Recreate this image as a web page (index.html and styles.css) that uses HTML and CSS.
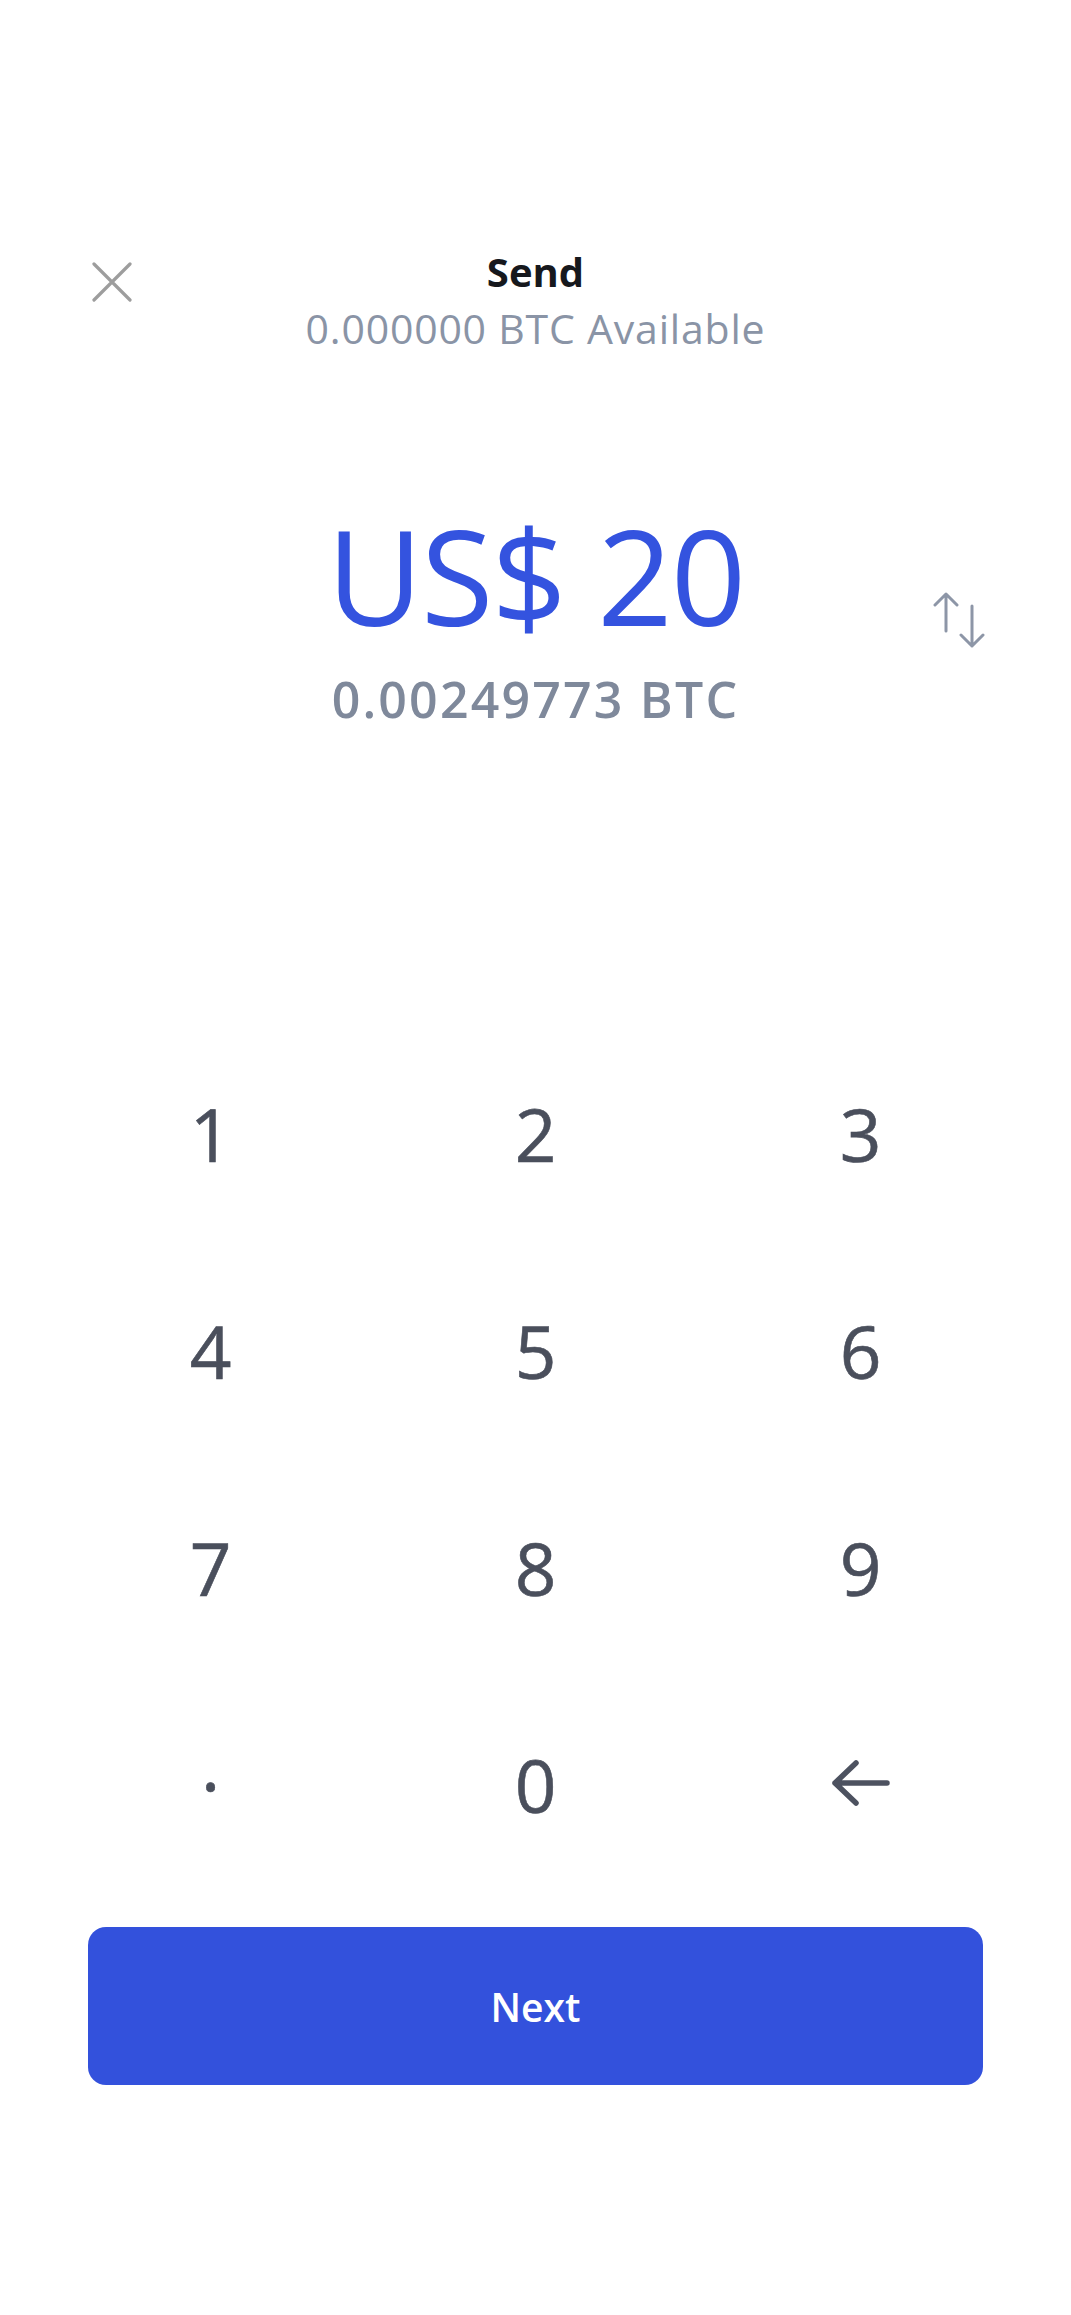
FILE: index.html
```html
<!DOCTYPE html>
<html lang="en">
<head>
<meta charset="utf-8">
<title>Send</title>
<link rel="stylesheet" href="styles.css">
</head>
<body>
<div class="screen">
  <header class="topbar">
    <div class="topbar-left">
      <button class="close" aria-label="Close">
        <svg width="40" height="40" viewBox="0 0 40 40"><path d="M2 2 L38 38 M38 2 L2 38" fill="none" stroke="#9d9d9d" stroke-width="3.2" stroke-linecap="round"/></svg>
      </button>
    </div>
    <div class="title">
      <div class="title-main">Send</div>
      <div class="title-sub">0.000000 BTC Available</div>
    </div>
    <div class="topbar-right"></div>
  </header>

  <section class="amount">
    <div></div>
    <div class="amount-values">
      <div class="amount-fiat">US$ 20</div>
      <div class="amount-crypto">0.00249773 BTC</div>
    </div>
    <div class="amount-side">
      <button class="swap" aria-label="Switch currency">
        <svg width="52" height="58" viewBox="0 0 52 58"><path d="M13 3 V40 M2 14 L13 3 L24 14 M39 15 V55 M28 44 L39 55 L50 44" fill="none" stroke="#8d96a7" stroke-width="3" stroke-linecap="round" stroke-linejoin="round"/></svg>
      </button>
    </div>
  </section>

  <section class="keypad">
    <div class="key">1</div>
    <div class="key">2</div>
    <div class="key">3</div>
    <div class="key">4</div>
    <div class="key">5</div>
    <div class="key">6</div>
    <div class="key">7</div>
    <div class="key">8</div>
    <div class="key">9</div>
    <div class="key">·</div>
    <div class="key">0</div>
    <div class="key">
      <svg width="60" height="48" viewBox="0 0 60 48"><path d="M4 24 H56 M25 4 L4 24 L25 44" fill="none" stroke="#4d5260" stroke-width="5.5" stroke-linecap="round" stroke-linejoin="round"/></svg>
    </div>
  </section>

  <div class="actions">
    <button class="next">Next</button>
  </div>
</div>
</body>
</html>
```

FILE: styles.css
```css
* {
  box-sizing: border-box;
}

html, body {
  margin: 0;
  padding: 0;
  background: #ffffff;
}

body {
  font-family: "Open Sans", "Noto Sans", "DejaVu Sans", sans-serif;
  color: #4d5260;
}

.screen {
  width: 1071px;
  min-height: 2315px;
  background: #ffffff;
}

button {
  font-family: inherit;
  border: 0;
  background: none;
  padding: 0;
  margin: 0;
  cursor: pointer;
}

/* Header */
.topbar {
  display: grid;
  grid-template-columns: 1fr auto 1fr;
  padding-top: 248px;
}

.topbar-left {
  padding-left: 92px;
  padding-top: 14px;
}

.close {
  display: block;
  width: 40px;
  height: 40px;
}

.close svg {
  display: block;
}

.title {
  text-align: center;
}

.title-main {
  font-size: 40px;
  line-height: 48px;
  font-weight: 700;
  color: #16181d;
}

.title-sub {
  margin-top: 7px;
  font-size: 41px;
  line-height: 50px;
  font-weight: 400;
  color: #8a94a6;
  letter-spacing: 0.8px;
}

/* Amount */
.amount {
  display: grid;
  grid-template-columns: 1fr auto 1fr;
  margin-top: 147px;
}

.amount-values {
  text-align: center;
}

.amount-fiat {
  font-size: 132px;
  line-height: 150px;
  font-weight: 400;
  color: #3453df;
  letter-spacing: -2px;
  white-space: nowrap;
}

.amount-crypto {
  margin-top: 19px;
  font-size: 50px;
  line-height: 60px;
  font-weight: 600;
  color: #7f899b;
  letter-spacing: 2.2px;
  white-space: nowrap;
}

.amount-side {
  display: flex;
  justify-content: flex-end;
  align-items: flex-start;
  padding-right: 86px;
  padding-top: 91px;
}

.swap {
  display: block;
  width: 52px;
  height: 58px;
}

.swap svg {
  display: block;
}

/* Keypad */
.keypad {
  display: grid;
  grid-template-columns: repeat(3, 325px);
  grid-auto-rows: 217px;
  margin-top: 294px;
  padding: 0 48px;
}

.key {
  display: flex;
  align-items: center;
  justify-content: center;
  font-size: 73px;
  line-height: 1;
  font-weight: 400;
  color: #4a4f5c;
  padding-top: 4px;
  -webkit-text-stroke: 0.6px #4a4f5c;
}

.key svg {
  display: block;
  margin-top: -4px;
}

/* Action */
.actions {
  padding: 36px 88px 0;
}

.next {
  display: flex;
  align-items: center;
  justify-content: center;
  width: 100%;
  height: 158px;
  border-radius: 18px;
  background: #3351dc;
  color: #ffffff;
  font-size: 39px;
  font-weight: 600;
}
```
